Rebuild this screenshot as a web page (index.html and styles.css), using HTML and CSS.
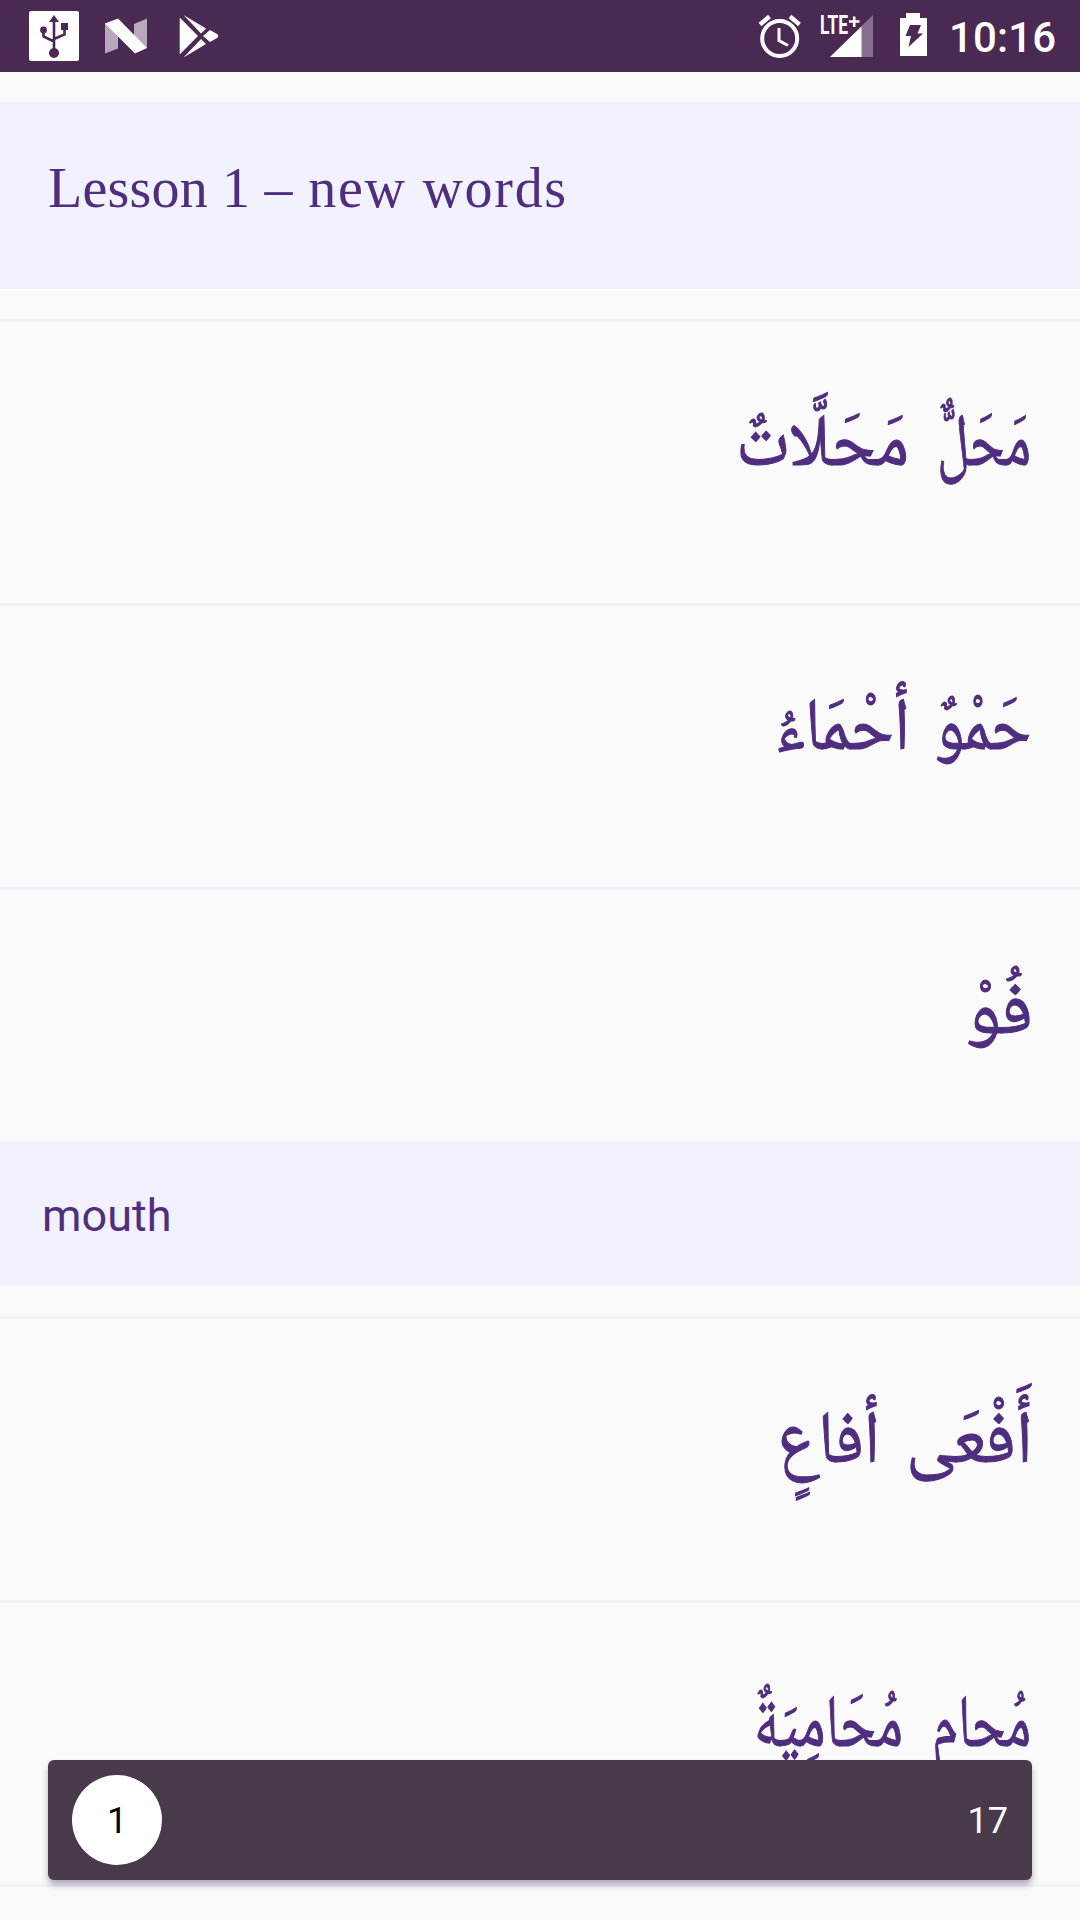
FILE: index.html
```html
<!DOCTYPE html>
<html lang="en">
<head>
    <meta charset="UTF-8">
    <meta name="viewport" content="width=device-width, initial-scale=1.0">
    <title>Lesson 1</title>
    <link rel="stylesheet" href="styles.css">
</head>
<body>
    <div class="status">
        <svg width="1080" height="72" viewBox="0 0 1080 72">
            <!-- usb -->
            <rect x="29" y="11" width="50" height="50" rx="2" fill="#fff"/>
            <g fill="#4a2953">
                <circle cx="54" cy="53" r="5"/>
                <path d="M54 15l5 7h-10z"/>
                <circle cx="43.5" cy="30" r="3.4"/>
                <rect x="61" y="23" width="7" height="7"/>
            </g>
            <path d="M54 20v31M43.500 30v6.500l10.500 5M64.500 28v6.500L54 39" fill="none" stroke="#4a2953" stroke-width="2.600"/>
            <!-- nougat -->
            <path d="M105 23v30.500l13-5V28zM134 24l13-5.500V48l-13-10z" fill="#b8a8bc"/>
            <path d="M105 23.500L118 18.500 147 48 135 53.500z" fill="#fff"/>
            <!-- play store -->
            <path d="M179.700 17.500L198 36 179.700 54.500zM183.500 15l22.500 13.500-5 5zM183.500 57.500L201 39l5 5zM203 36l7-6 7 4q2.500 2 0 4l-7 4z" fill="#fff"/>
            <!-- alarm -->
            <g fill="none" stroke="#fff">
                <circle cx="779.700" cy="38.500" r="17.500" stroke-width="4"/>
                <path d="M779 28v12.500l9 5" stroke-width="3"/>
                <path d="M760 24.500l9.500-8M799.500 24.500l-9.500-8" stroke-width="4.300"/>
            </g>
            <!-- signal -->
            <path d="M873 15v42H830z" fill="#886f8f"/>
            <path d="M861.500 26.500V57H830z" fill="#fff"/>
            <text class="lte" x="820" y="34" textLength="28" lengthAdjust="spacingAndGlyphs">LTE</text>
            <path d="M849 21.500h10.500M854.200 16.500v10.500" stroke="#fff" stroke-width="2.600"/>
            <!-- battery -->
            <path d="M906 13h14v5h7v38h-27V18h6zM910 25l-4.500 11h5.500l-2.500 11 14.500-13.500h-5.500l3.500-8.500z" fill="#fff" fill-rule="evenodd"/>
            <text class="time" x="949" y="52" textLength="107">10:16</text>
        </svg>
    </div>
    <h1 class="title"><span class="lesson">Lesson 1 –</span> new words</h1>
    <div class="words">
        <div class="row">
            <svg width="1080" height="250">
                <text x="1031" y="143" textLength="94" lengthAdjust="spacingAndGlyphs">مَحَلٌّ</text>
                <text x="909" y="143" textLength="173" lengthAdjust="spacingAndGlyphs">مَحَلَّاتٌ</text>
            </svg>
        </div>
        <div class="row">
            <svg width="1080" height="250">
                <text x="1031" y="143" textLength="96" lengthAdjust="spacingAndGlyphs">حَمْوٌ</text>
                <text x="910" y="143" textLength="135" lengthAdjust="spacingAndGlyphs">أحْمَاءُ</text>
            </svg>
        </div>
        <div class="row open">
            <svg width="1080" height="250">
                <text x="1033" y="143" textLength="67" lengthAdjust="spacingAndGlyphs">فُوْ</text>
            </svg>
        </div>
        <div class="meaning">mouth</div>
        <div class="row">
            <svg width="1080" height="250">
                <text x="1033" y="143" textLength="127" lengthAdjust="spacingAndGlyphs">أَفْعَى</text>
                <text x="880" y="143" textLength="103" lengthAdjust="spacingAndGlyphs">أفاعٍ</text>
            </svg>
        </div>
        <div class="row">
            <svg width="1080" height="250">
                <text x="1031" y="143" textLength="99" lengthAdjust="spacingAndGlyphs">مُحام</text>
                <text x="903" y="143" textLength="149" lengthAdjust="spacingAndGlyphs">مُحَامِيَةٌ</text>
            </svg>
        </div>
        <div class="row last"></div>
    </div>
    <div class="bar">
        <span class="current">1</span>
        <span class="total">17</span>
    </div>
</body>
</html>
```

FILE: styles.css
```css
body {
    margin: 0;
    height: 1920px;
    overflow: hidden;
    background-color: #fafafa;
    color: #4f2d7f;
    font-family: Roboto, sans-serif;
}
.status {
    height: 72px;
    background-color: #4a2953;
}
.status svg {
    display: block;
}
.status text {
    fill: #fff;
    font-family: Roboto, sans-serif;
}
.lte {
    font-size: 26px;
    font-weight: 700;
}
.time {
    font-size: 42px;
    font-weight: 500;
}
.title {
    box-sizing: border-box;
    height: 187px;
    margin: 30px 0;
    padding-left: 48px;
    background-color: #f2f1fe;
    font-family: "Liberation Serif", serif;
    font-size: 56px;
    font-weight: 400;
    line-height: 173px;
    letter-spacing: 1.7px;
}
.lesson {
    letter-spacing: 0.2px;
}
.row {
    box-sizing: border-box;
    height: 284px;
    border-top: 3px solid #f1f1fb;
}
.row svg {
    display: block;
    direction: rtl;
}
.row text {
    fill: #4f2d7f;
    stroke: #4f2d7f;
    stroke-width: 1px;
    font-family: "Noto Naskh Arabic", Amiri, "DejaVu Sans", serif;
    font-size: 74px;
}
.row.open {
    height: 254px;
}
.row.last {
    height: 36px;
}
.meaning {
    box-sizing: border-box;
    height: 144px;
    margin-bottom: 31px;
    padding-left: 42px;
    background-color: #f2f1fe;
    font-size: 45px;
    line-height: 150px;
}
.bar {
    position: absolute;
    left: 48px;
    top: 1760px;
    box-sizing: border-box;
    display: flex;
    align-items: center;
    justify-content: space-between;
    width: 984px;
    height: 120px;
    padding: 0 24px;
    border-radius: 6px;
    background-color: #48394b;
    box-shadow: 0 5px 6px rgba(50, 30, 70, 0.35);
    color: #fff;
    font-size: 36px;
    line-height: 92px;
}
.current {
    width: 90px;
    height: 90px;
    border-radius: 50%;
    background-color: #fff;
    color: #000;
    text-align: center;
}
.total {
    padding-top: 2px;
}
```
